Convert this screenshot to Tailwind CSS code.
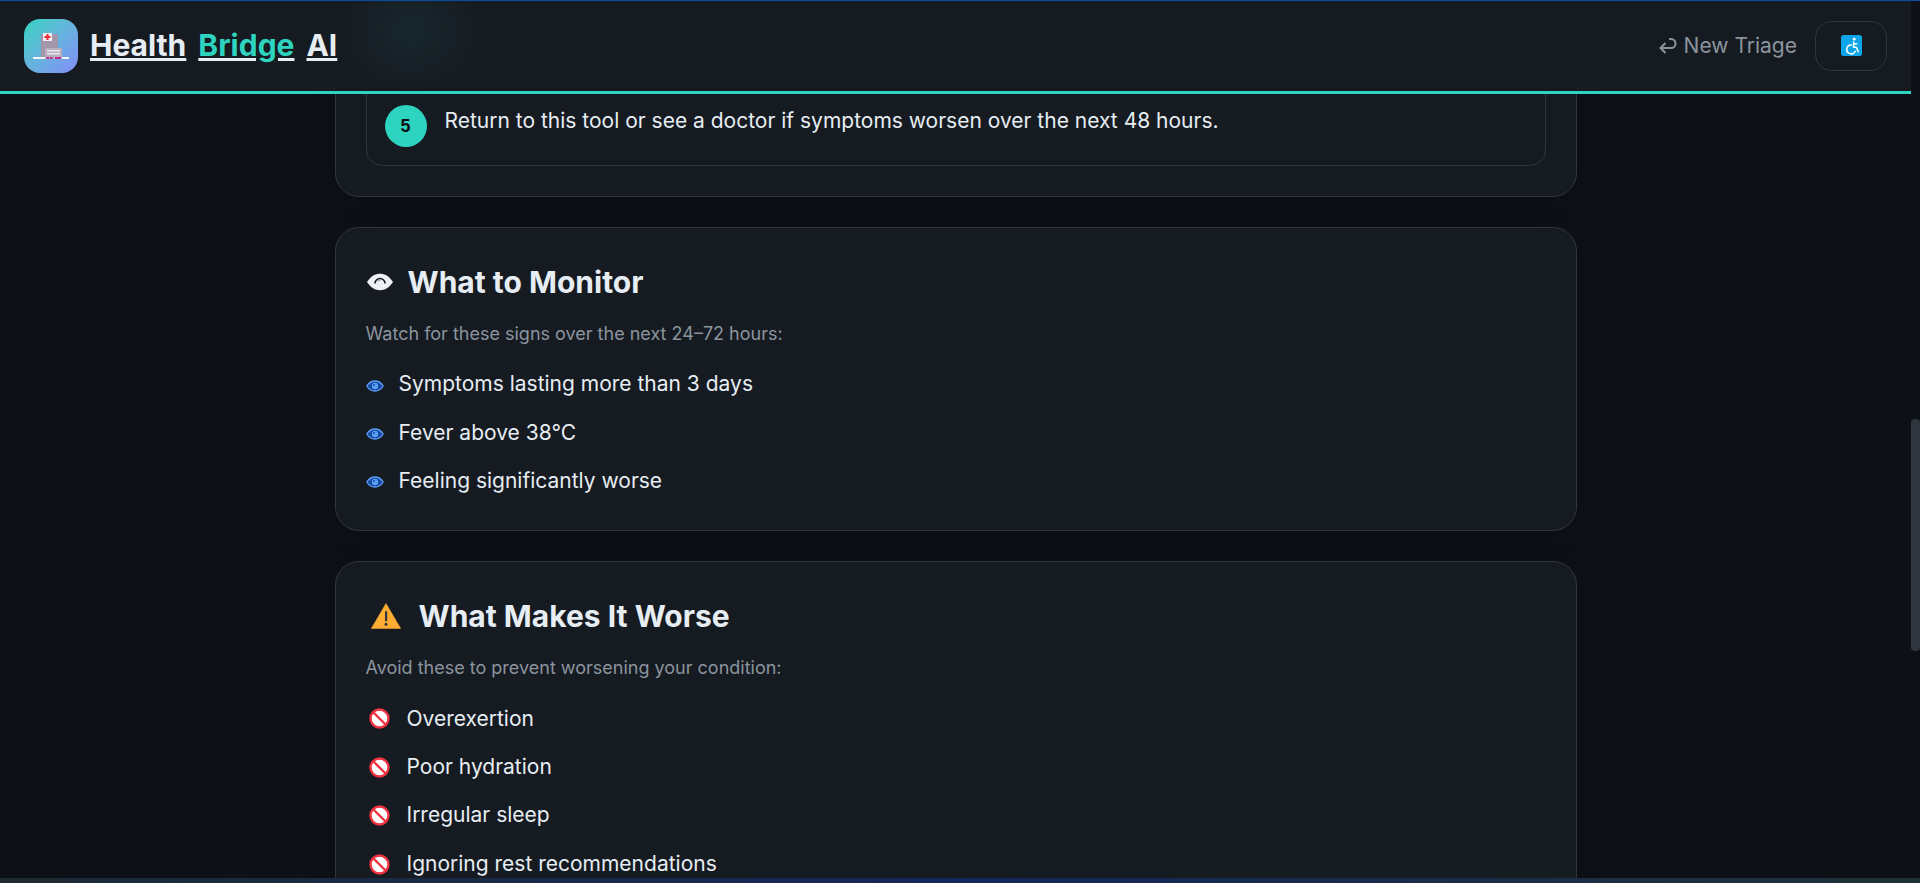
<!DOCTYPE html>
<html lang="en">
  <head>
    <meta charset="UTF-8" />
    <meta name="viewport" content="width=device-width, initial-scale=1.0" />
    <title>Health Bridge AI</title>
    <script src="https://cdn.jsdelivr.net/npm/@tailwindcss/browser@4"></script>
  </head>
  <body class="bg-[#0d1117] h-screen overflow-hidden flex flex-col font-['Inter',sans-serif] text-[#e6edf3]">
    <div class="h-px bg-[#0f4c9c] shrink-0"></div>

    <div class="flex-1 flex min-h-0">
      <div class="flex-1 min-w-0 flex flex-col overflow-hidden">
        <!-- Header -->
        <header class="relative z-10 h-[93px] shrink-0 bg-[#161b22] border-b-[3px] border-[#2dd4bf] flex items-center justify-between pl-6 pr-6 pb-px overflow-hidden">
          <div class="absolute left-[340px] -top-[30px] w-[140px] h-[120px] bg-[radial-gradient(closest-side,rgba(45,212,191,0.07),transparent)]"></div>
          <a class="relative flex items-center gap-3 underline text-[#e6edf3]">
            <div class="w-[54px] h-[54px] rounded-2xl bg-gradient-to-br from-[#2dd4bf] to-[#818cf8] flex items-center justify-center">
              <svg width="40" height="40" viewBox="0 0 40 40">
                <rect x="10" y="8" width="17" height="25" rx="1.5" fill="#a296aa" />
                <rect x="2" y="31" width="36" height="2" fill="#f4f4f8" />
                <rect x="12" y="7" width="9" height="8" fill="#f2eef2" />
                <path d="M15.500 8h2v2h2v2h-2v2h-2v-2h-2v-2h2z" fill="#ef2b3a" />
                <rect x="14" y="22" width="17" height="11" rx="1" fill="#b7afc0" />
                <rect x="16" y="24" width="13" height="1.5" fill="#ece8ee" />
                <rect x="16" y="27" width="13" height="1.5" fill="#ece8ee" />
                <rect x="15.500" y="31" width="2.5" height="2" fill="#c2258c" />
                <rect x="19" y="31" width="2.5" height="2" fill="#c2258c" />
                <rect x="24" y="31" width="6" height="2" fill="#c2258c" />
              </svg>
            </div>
            <span class="text-[30px] font-bold">Health</span>
            <span class="text-[30px] font-bold text-[#2dd4bf]">Bridge</span>
            <span class="text-[30px] font-bold">AI</span>
          </a>
          <div class="relative flex items-center gap-[18px]">
            <span class="text-[21px] text-[#8b949e] flex items-center gap-[7px]">
              <svg width="18" height="16" viewBox="0 0 18 16" fill="none" stroke="#8b949e" stroke-width="2">
                <path d="M6.500 5 1.500 10l5 5M1.500 10H12a4.500 4.500 0 0 0 0-9H10" />
              </svg>
              New Triage
            </span>
            <button class="w-[72px] h-[50px] rounded-2xl border border-[#30363d] flex items-center justify-center">
              <svg width="21" height="21" viewBox="0 0 21 21">
                <rect width="21" height="21" rx="2.5" fill="#0ea5e9" />
                <circle cx="13.2" cy="4.2" r="1.4" fill="#fff" />
                <path d="M12.6 7v5.2h2.8l1.8 4.4M12.6 8.8h3.2" fill="none" stroke="#fff" stroke-width="1.5" stroke-linecap="round" stroke-linejoin="round" />
                <path d="M10.4 10a4.4 4.4 0 1 0 3.8 6.2" fill="none" stroke="#fff" stroke-width="1.5" stroke-linecap="round" />
              </svg>
            </button>
          </div>
        </header>

        <main class="w-[1242px] mx-auto -mt-[28px] flex flex-col gap-[30px]">
          <!-- Next steps, scrolled past -->
          <section class="rounded-3xl border border-[#30363d] bg-[#161b22] px-[30px] pb-[30px] shadow-[0_4px_24px_rgba(0,0,0,0.2)]">
            <div class="rounded-2xl border border-[#30363d] px-[18px] pt-[37px] pb-[18px] flex items-start gap-[18px]">
              <div class="w-[42px] h-[42px] rounded-full bg-[#2dd4bf] text-[#0d1117] font-['Liberation_Sans'] font-bold text-[18px] flex items-center justify-center shrink-0">5</div>
              <p class="mt-px text-[21px] leading-[30px] text-[#e6edf3]">Return to this tool or see a doctor if symptoms worsen over the next 48 hours.</p>
            </div>
          </section>

          <!-- What to Monitor -->
          <section class="rounded-3xl border border-[#30363d] bg-[#161b22] px-[30px] pt-[30px] pb-[25px] shadow-[0_4px_24px_rgba(0,0,0,0.2)]">
            <h2 class="flex items-center gap-[14px] text-[30px] leading-[48px] font-bold">
              <svg width="28" height="18" viewBox="0 0 28 18">
                <path d="M1 9C5 3 9 .8 14 .8S23 3 27 9c-4 6-8 8.200-13 8.200S5 15 1 9z" fill="#eef2f6" />
                <path d="M9 10.500a5 5 0 0 1 10 0" fill="none" stroke="#161b22" stroke-width="1.600" />
                <path d="M11.500 8.500a3 3 0 0 1 3-1.500" fill="none" stroke="#7d8590" stroke-width="1" />
              </svg>
              What to Monitor
            </h2>
            <p class="mt-[14px] text-[18px] leading-[27px] text-[#8b949e]">Watch for these signs over the next 24–72 hours:</p>
            <ul class="mt-[13px] flex flex-col">
              <li class="h-[48.4px] flex items-center gap-[15px] text-[21px]">
                <svg width="18" height="12" viewBox="0 0 18 12" class="mt-[3px]"><path d="M.8 6C3 2.500 5.500 1 9 1s6 1.500 8.200 5C15 9.500 12.500 11 9 11S3 9.500.8 6z" fill="#174a9c" stroke="#5a9ffa" stroke-width="1.300" /><circle cx="9" cy="6" r="3.200" fill="#5a9ffa" /><circle cx="8" cy="5" r="1" fill="#174a9c" /></svg>
                Symptoms lasting more than 3 days
              </li>
              <li class="h-[48.4px] flex items-center gap-[15px] text-[21px]">
                <svg width="18" height="12" viewBox="0 0 18 12" class="mt-[3px]"><path d="M.8 6C3 2.500 5.500 1 9 1s6 1.500 8.200 5C15 9.500 12.500 11 9 11S3 9.500.8 6z" fill="#174a9c" stroke="#5a9ffa" stroke-width="1.300" /><circle cx="9" cy="6" r="3.200" fill="#5a9ffa" /><circle cx="8" cy="5" r="1" fill="#174a9c" /></svg>
                Fever above 38°C
              </li>
              <li class="h-[48.4px] flex items-center gap-[15px] text-[21px]">
                <svg width="18" height="12" viewBox="0 0 18 12" class="mt-[3px]"><path d="M.8 6C3 2.500 5.500 1 9 1s6 1.500 8.200 5C15 9.500 12.500 11 9 11S3 9.500.8 6z" fill="#174a9c" stroke="#5a9ffa" stroke-width="1.300" /><circle cx="9" cy="6" r="3.200" fill="#5a9ffa" /><circle cx="8" cy="5" r="1" fill="#174a9c" /></svg>
                Feeling significantly worse
              </li>
            </ul>
          </section>

          <!-- What Makes It Worse -->
          <section class="rounded-3xl border border-[#30363d] bg-[#161b22] px-[30px] pt-[30px] pb-[24px] shadow-[0_4px_24px_rgba(0,0,0,0.2)]">
            <h2 class="flex items-center gap-[18px] text-[30px] leading-[48px] font-bold">
              <svg width="30" height="26" viewBox="0 0 30 26" class="ml-[5px]">
                <path d="M15 .5 29.700 25.500H.300z" fill="#ffac33" stroke="#ffac33" stroke-width=".5" stroke-linejoin="round" />
                <rect x="14" y="8" width="2.200" height="10.500" rx="1.100" fill="#31373d" />
                <circle cx="15" cy="21.200" r="1.500" fill="#31373d" />
              </svg>
              What Makes It Worse
            </h2>
            <p class="mt-[14px] text-[18px] leading-[27px] text-[#8b949e]">Avoid these to prevent worsening your condition:</p>
            <ul class="mt-[13px] flex flex-col">
              <li class="h-[48.4px] flex items-center gap-[17px] text-[21px] pl-[3px]">
                <svg width="21" height="21" viewBox="0 0 21 21" class="mt-px"><circle cx="10.500" cy="10.500" r="9" fill="#fff" stroke="#ef3340" stroke-width="2.400" /><path d="M4.500 4.500 16.500 16.500" stroke="#ef3340" stroke-width="2.400" /></svg>
                Overexertion
              </li>
              <li class="h-[48.4px] flex items-center gap-[17px] text-[21px] pl-[3px]">
                <svg width="21" height="21" viewBox="0 0 21 21" class="mt-px"><circle cx="10.500" cy="10.500" r="9" fill="#fff" stroke="#ef3340" stroke-width="2.400" /><path d="M4.500 4.500 16.500 16.500" stroke="#ef3340" stroke-width="2.400" /></svg>
                Poor hydration
              </li>
              <li class="h-[48.4px] flex items-center gap-[17px] text-[21px] pl-[3px]">
                <svg width="21" height="21" viewBox="0 0 21 21" class="mt-px"><circle cx="10.500" cy="10.500" r="9" fill="#fff" stroke="#ef3340" stroke-width="2.400" /><path d="M4.500 4.500 16.500 16.500" stroke="#ef3340" stroke-width="2.400" /></svg>
                Irregular sleep
              </li>
              <li class="h-[48.4px] flex items-center gap-[17px] text-[21px] pl-[3px]">
                <svg width="21" height="21" viewBox="0 0 21 21" class="mt-px"><circle cx="10.500" cy="10.500" r="9" fill="#fff" stroke="#ef3340" stroke-width="2.400" /><path d="M4.500 4.500 16.500 16.500" stroke="#ef3340" stroke-width="2.400" /></svg>
                Ignoring rest recommendations
              </li>
            </ul>
          </section>
        </main>
      </div>

      <!-- Scrollbar -->
      <div class="w-[9px] shrink-0 pt-[418px]">
        <div class="h-[232px] rounded-[4px] bg-[#30363d]"></div>
      </div>
    </div>

    <div class="h-[5px] shrink-0 bg-gradient-to-r from-[#1e2b33] via-[#15265a] to-[#1f3035]"></div>
  </body>
</html>
